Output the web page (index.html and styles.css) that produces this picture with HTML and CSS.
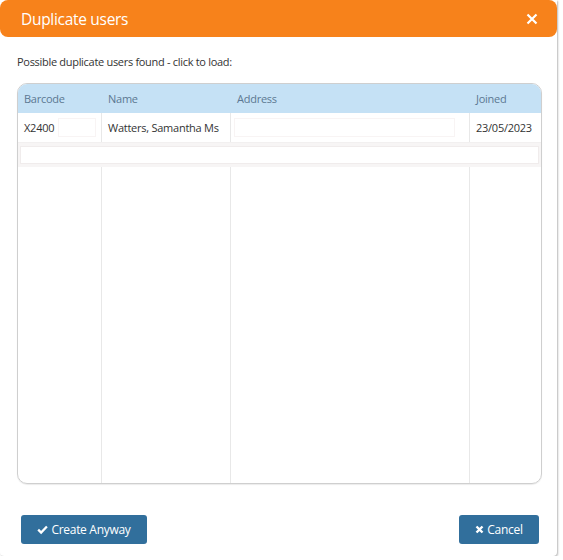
FILE: index.html
```html
<!DOCTYPE html>
<html>
<head>
<meta charset="utf-8">
<link rel="stylesheet" href="styles.css">
</head>
<body>
<div class="dialog">
  <div class="header">
    <span class="title">Duplicate users</span>
    <svg class="close" viewBox="0 0 12 12" width="12" height="12"><path d="M1.5 1.5 L10.5 10.5 M10.5 1.5 L1.5 10.5" fill="none" stroke="#fff" stroke-width="2.2"/></svg>
  </div>
  <div class="body">
    <p class="intro">Possible duplicate users found - click to load:</p>
    <div class="grid">
      <div class="cols">
        <div class="col c1"></div>
        <div class="col c2"></div>
        <div class="col c3"></div>
        <div class="col c4"></div>
      </div>
      <div class="row head">
        <div class="cell c1">Barcode</div>
        <div class="cell c2">Name</div>
        <div class="cell c3">Address</div>
        <div class="cell c4">Joined</div>
      </div>
      <div class="row data">
        <div class="cell c1">X2400<span class="ghost g1"></span></div>
        <div class="cell c2">Watters, Samantha Ms</div>
        <div class="cell c3"><span class="ghost g3"></span></div>
        <div class="cell c4">23/05/2023</div>
      </div>
      <div class="row extra">
        <div class="ghost wide"></div>
      </div>
    </div>
  </div>
  <div class="footer">
    <button class="btn b1"><svg class="ico" viewBox="0 0 12 12" width="11" height="11"><path d="M1.3 6.2 L4.5 9.3 L10.8 2.8" fill="none" stroke="#fff" stroke-width="2.5"/></svg>Create Anyway</button>
    <button class="btn b2"><svg class="ico" viewBox="0 0 12 12" width="9" height="9"><path d="M2 2 L10 10 M10 2 L2 10" fill="none" stroke="#fff" stroke-width="3.2"/></svg>Cancel</button>
  </div>
</div>
</body>
</html>
```
FILE: styles.css
```css
html, body {
  margin: 0;
  padding: 0;
  background: #fff;
}
body {
  font-family: "Open Sans", "Noto Sans", sans-serif;
  color: #333;
}
.dialog {
  width: 557px;
  height: 556px;
  background: #fff;
  box-shadow: 1px 1px 2px rgba(0,0,0,0.28);
  border-radius: 0 0 4px 4px;
  display: flex;
  flex-direction: column;
}
.header {
  height: 37px;
  background: #f7821b;
  border-radius: 8px;
  display: flex;
  align-items: center;
  justify-content: space-between;
  padding: 0 19px 0 21px;
  color: #fff;
}
.title {
  font-size: 15.5px;
  letter-spacing: -0.3px;
  line-height: 20px;
}
.close { display: block; }
.body {
  padding: 0 15px 0 17px;
  flex: 1;
}
.intro {
  margin: 17px 0 0;
  font-size: 11px;
  letter-spacing: -0.3px;
  line-height: 16px;
}
.grid {
  position: relative;
  margin-top: 13px;
  height: 399px;
  border: 1px solid #cfcfcf;
  border-radius: 10px;
  overflow: hidden;
  box-shadow: 0 1px 1px rgba(0,0,0,0.08);
}
.cols {
  position: absolute;
  inset: 0;
  display: flex;
}
.col { height: 100%; box-sizing: border-box; }
.c1 { width: 84px; }
.c2 { width: 129px; }
.c3 { width: 239px; }
.c4 { flex: 1; }
.cols .c1, .cols .c2, .cols .c3 { border-right: 1px solid #e8e8e8; }
.row {
  position: relative;
  display: flex;
  font-size: 11px;
  letter-spacing: -0.25px;
}
.cell {
  box-sizing: border-box;
  padding-left: 6px;
  display: flex;
  align-items: center;
  white-space: nowrap;
}
.head {
  height: 29px;
  background: #c5e1f5;
  color: #5c7892;
}
.data {
  height: 29px;
  color: #333;
  border-bottom: 1px solid #f2f0f0;
}
.ghost {
  display: inline-block;
  border: 1px solid #f8f4f4;
  background: #fff;
}
.g1 {
  width: 36px;
  height: 17px;
  margin-left: 4px;
}
.data .c3 { padding-left: 3px; }
.g3 {
  width: 219px;
  height: 17px;
}
.extra {
  height: 24px;
  padding: 3px 2px;
  box-sizing: border-box;
  background: #f7f5f5;
}
.wide {
  flex: 1;
  height: 16px;
  border-color: #f0ecec;
}
.footer {
  display: flex;
  justify-content: space-between;
  padding: 0 18px 12px 21px;
}
.btn {
  height: 29px;
  background: #316f9c;
  color: #fff;
  border: none;
  border-radius: 3px;
  font-family: "Open Sans", "Noto Sans", sans-serif;
  font-size: 12px;
  letter-spacing: -0.3px;
  padding: 0;
  display: flex;
  align-items: center;
  justify-content: center;
  gap: 3px;
  white-space: nowrap;
}
.b1 { width: 126px; }
.b2 { width: 80px; }
.ico { flex: none; }
```
